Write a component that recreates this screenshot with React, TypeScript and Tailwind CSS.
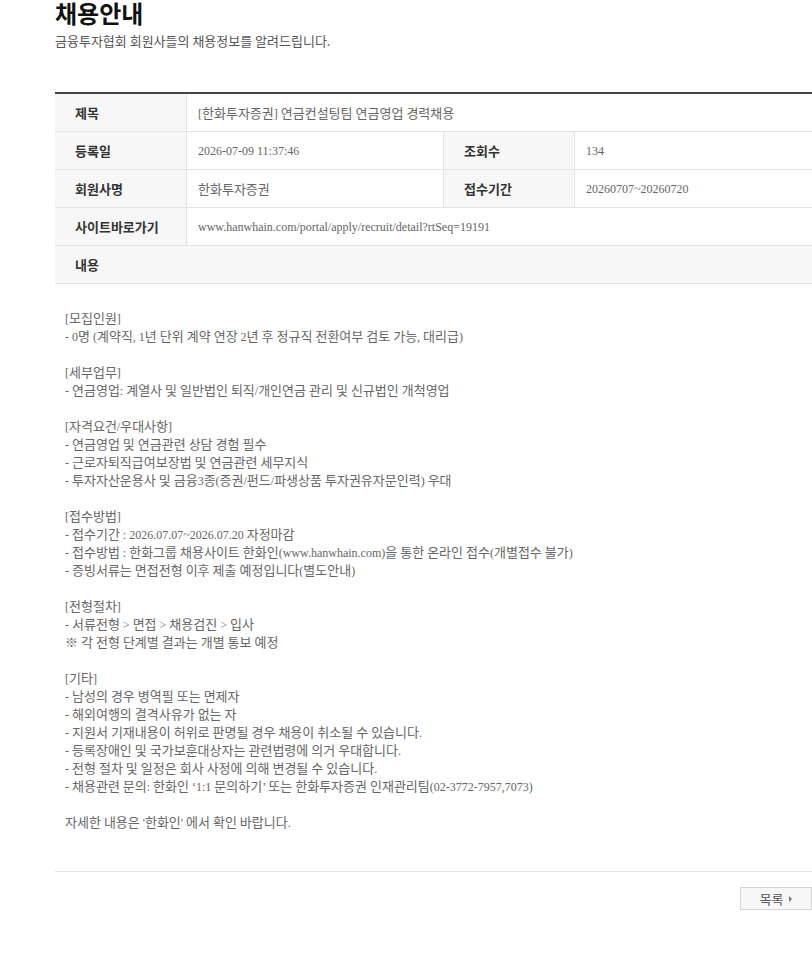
import React from 'react';

const serif = "font-['Liberation_Serif','Noto_Sans_CJK_KR',serif]";
const sans = "font-['Noto_Sans_CJK_KR','Noto_Sans',sans-serif]";

const body: string[] = [
  '[모집인원]',
  '- 0명 (계약직, 1년 단위 계약 연장 2년 후 정규직 전환여부 검토 가능, 대리급)',
  '',
  '[세부업무]',
  '- 연금영업: 계열사 및 일반법인 퇴직/개인연금 관리 및 신규법인 개척영업',
  '',
  '[자격요건/우대사항]',
  '- 연금영업 및 연금관련 상담 경험 필수',
  '- 근로자퇴직급여보장법 및 연금관련 세무지식',
  '- 투자자산운용사 및 금융3종(증권/펀드/파생상품 투자권유자문인력) 우대',
  '',
  '[접수방법]',
  '- 접수기간 : 2026.07.07~2026.07.20 자정마감',
  '- 접수방법 : 한화그룹 채용사이트 한화인(www.hanwhain.com)을 통한 온라인 접수(개별접수 불가)',
  '- 증빙서류는 면접전형 이후 제출 예정입니다(별도안내)',
  '',
  '[전형절차]',
  '- 서류전형 > 면접 > 채용검진 > 입사',
  '※ 각 전형 단계별 결과는 개별 통보 예정',
  '',
  '[기타]',
  '- 남성의 경우 병역필 또는 면제자',
  '- 해외여행의 결격사유가 없는 자',
  '- 지원서 기재내용이 허위로 판명될 경우 채용이 취소될 수 있습니다.',
  '- 등록장애인 및 국가보훈대상자는 관련법령에 의거 우대합니다.',
  '- 전형 절차 및 일정은 회사 사정에 의해 변경될 수 있습니다.',
  '- 채용관련 문의: 한화인 ‘1:1 문의하기’ 또는 한화투자증권 인재관리팀(02-3772-7957,7073)',
  '',
  "자세한 내용은 '한화인' 에서 확인 바랍니다.",
];

// hangul runs get a slightly larger size so they take the same room as in the original
function Mixed({ text }: { text: string }) {
  const parts = text.split(/([\u1100-\u11ff\u3130-\u318f\uac00-\ud7a3※]+)/);
  return (
    <>
      {parts.map((p, i) =>
        i % 2 === 1 ? (
          <span key={i} className={`text-[13px] ${sans}`}>
            {p}
          </span>
        ) : (
          <span key={i}>{p}</span>
        )
      )}
    </>
  );
}

function Label({ children, left }: { children: React.ReactNode; left?: boolean }) {
  return (
    <div
      className={`flex items-center h-[37px] pl-[20px] bg-[#f7f7f7] border-r border-[#e3e3e3] text-[13px] font-bold text-[#333] ${sans} ${left ? 'border-l' : ''}`}
    >
      {children}
    </div>
  );
}

function Value({ text, span }: { text: string; span?: boolean }) {
  return (
    <div
      className={`flex items-center h-[37px] pl-[11px] text-[12px] text-[#666] whitespace-pre ${serif} ${span ? 'col-span-3' : ''}`}
    >
      <div>
        <Mixed text={text} />
      </div>
    </div>
  );
}

export default function App() {
  return (
    <div className="min-h-screen bg-white">
      <div className="ml-[55px] w-[757px]">
        <h1 className={`text-[24px] leading-[26px] font-bold text-[#111] ${sans}`}>채용안내</h1>
        <p className={`mt-[6px] text-[13px] leading-[18px] text-[#555] ${sans}`}>
          금융투자협회 회원사들의 채용정보를 알려드립니다.
        </p>

        <div className="mt-[42px] border-t-2 border-[#444]">
          <div className="grid grid-cols-[132px_256px_132px_1fr] border-b border-[#e3e3e3]">
            <Label>제목</Label>
            <Value span text="[한화투자증권] 연금컨설팅팀 연금영업 경력채용" />
          </div>
          <div className="grid grid-cols-[132px_256px_132px_1fr] border-b border-[#e3e3e3]">
            <Label>등록일</Label>
            <Value text="2026-07-09 11:37:46" />
            <Label left>조회수</Label>
            <Value text="134" />
          </div>
          <div className="grid grid-cols-[132px_256px_132px_1fr] border-b border-[#e3e3e3]">
            <Label>회원사명</Label>
            <Value text="한화투자증권" />
            <Label left>접수기간</Label>
            <Value text="20260707~20260720" />
          </div>
          <div className="grid grid-cols-[132px_256px_132px_1fr] border-b border-[#e3e3e3]">
            <Label>사이트바로가기</Label>
            <Value span text="www.hanwhain.com/portal/apply/recruit/detail?rtSeq=19191" />
          </div>
          <div className="flex items-center h-[38px] pl-[20px] bg-[#f7f7f7] border-b border-[#e3e3e3]">
            <span className={`text-[13px] font-bold text-[#333] ${sans}`}>내용</span>
          </div>

          <div
            className={`pt-[25px] pb-[40px] px-[10px] text-[12px] leading-[18px] text-[#666] ${serif} border-b border-[#e3e3e3]`}
          >
            {body.map((line, i) => (
              <div key={i} className="h-[18px] whitespace-pre">
                <Mixed text={line} />
              </div>
            ))}
          </div>
        </div>

        <div className="flex justify-end mt-[15px]">
          <button
            type="button"
            className={`flex items-center justify-center gap-[6px] w-[72px] h-[23px] bg-[#f7f7f7] border border-[#d5d5d5] text-[13px] text-[#555] ${sans}`}
          >
            목록
            <span className="w-0 h-0 border-y-[3px] border-y-transparent border-l-[3px] border-l-[#777]" />
          </button>
        </div>
      </div>
    </div>
  );
}
